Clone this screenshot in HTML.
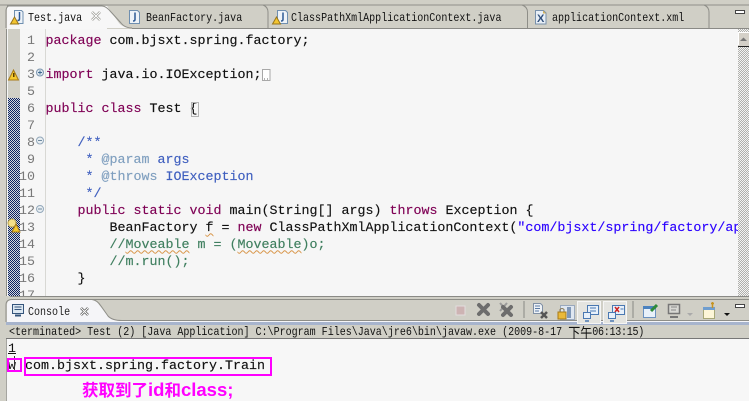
<!DOCTYPE html>
<html><head><meta charset="utf-8">
<style>
html,body{margin:0;padding:0}
body{width:749px;height:401px;overflow:hidden;position:relative;background:#d4d0c8;font-family:"Liberation Mono",monospace}
div{position:absolute}
.t{font-size:12px;line-height:14px;color:#111;white-space:pre;transform:scaleX(.835);transform-origin:0 0}
.o{font-size:13.33px;line-height:17px;color:#111;white-space:pre}
.l{left:45.5px;font-size:13.33px;line-height:17px;height:17px;white-space:pre;color:#111;-webkit-text-stroke:.15px}
.n{left:10px;width:25px;text-align:right;font-size:13.33px;line-height:17px;height:17px;color:#787878}
.k{color:#7f0055}.c{color:#3f7f5f}.j{color:#3f5fbf}.g{color:#7f9fbf}.s{color:#2a00ff}
.u{text-decoration:underline wavy #d8964a 1px;text-underline-offset:2px}
</style></head><body>

<!-- editor tab bar -->
<svg style="position:absolute;left:0;top:0" width="749" height="30">
<rect width="749" height="30" fill="#d0cfc6"/>
<path d="M0 5H749" stroke="#8f8f8a" fill="none"/>
<rect x="7" y="6" width="100" height="23" fill="#f7f7f7"/>
<path d="M107 6L119 23Q123 28 132 28L107 28Z" fill="#f7f7f7"/>
<path d="M7 6H102Q106 6 111 12L121 23Q125 28 132 28" fill="none" stroke="#8e8e88"/>
<path d="M6 28V11Q6 5 13 5H102" fill="none" stroke="#8e8e88"/>
<path d="M132 28.500H749" stroke="#8a8a86" fill="none"/>
<path d="M268 28V12Q268 7 263 5M527.500 28V12Q527.500 7 522 5M709 28V12Q709 7 704 5" stroke="#8e8e88" fill="none"/>
<rect x="735.500" y="10.500" width="9" height="3" fill="#fff" stroke="#444" stroke-width="1"/>
<!-- java file icons -->
<path d="M14.500 10.500h7l1.500 1.500v11.500h-8.500z" fill="#eef3f8" stroke="#6f8fb0"/><path d="M19.500 12v7q0 1.500-2 1.500" stroke="#2d5a96" stroke-width="1.500" fill="none"/>
<path d="M10.500 24L14.500 17L18.500 24z" fill="#f3c530" stroke="#97741a"/>
<path d="M129.500 10.500h8l2 2v11h-10z" fill="#eef3f8" stroke="#6f8fb0"/><path d="M135 12.500v7q0 1.500-2 1.500" stroke="#2d5a96" stroke-width="1.500" fill="none"/>
<path d="M277.500 10.500h8l2 2v11h-10z" fill="#eef3f8" stroke="#6f8fb0"/><path d="M283 12.500v7q0 1.500-2 1.500" stroke="#2d5a96" stroke-width="1.500" fill="none"/>
<path d="M272.500 24L276.500 17L280.500 24z" fill="#f3c530" stroke="#97741a"/>
<path d="M535.500 10.500h8l2.500 2.500v11h-10.500z" fill="#e7eef6" stroke="#7890aa"/>
<path d="M543 10.500l3 3h-3z" fill="#d8b45a"/>
<text x="537" y="22" font-family="Liberation Sans" font-size="11" font-weight="bold" fill="#31507c">X</text>
<path d="M92 12l8 8M100 12l-8 8" stroke="#9a9a94" stroke-width="2.500"/><path d="M92 12l8 8M100 12l-8 8" stroke="#fff" stroke-width="1"/>
</svg>
<div class="t" style="left:28px;top:11px">Test.java</div>
<div class="t" style="left:146px;top:11px">BeanFactory.java</div>
<div class="t" style="left:291px;top:11px">ClassPathXmlApplicationContext.java</div>
<div class="t" style="left:552px;top:11px">applicationContext.xml</div>

<!-- editor -->
<div style="left:6px;top:29px;width:743px;height:268px;background:#f6f6f6;overflow:hidden">
  <div style="left:0;top:0;width:1px;height:268px;background:#8e8e88"></div>
  <div style="left:2px;top:0;width:12px;height:268px;background:#d0cfc6"></div>
  <svg style="position:absolute;left:2px;top:69px" width="12" height="199" shape-rendering="crispEdges"><defs><pattern id="d" width="2" height="2" patternUnits="userSpaceOnUse"><rect width="2" height="2" fill="#d4d6dc"/><rect width="1" height="1" fill="#0a2060"/><rect x="1" y="1" width="1" height="1" fill="#0a2060"/></pattern></defs><rect width="12" height="199" fill="url(#d)"/></svg>
  <div style="left:39px;top:0;width:1px;height:268px;background:#d8d8d4"></div>
  <svg style="position:absolute;left:732px;top:0" width="11" height="268" shape-rendering="crispEdges"><defs><pattern id="e" width="2" height="2" patternUnits="userSpaceOnUse"><rect width="2" height="2" fill="#f4f4f4"/><rect width="1" height="1" fill="#b0b0ac"/><rect x="1" y="1" width="1" height="1" fill="#b0b0ac"/></pattern></defs><rect width="11" height="268" fill="url(#e)"/></svg>
  <div style="left:732px;top:3px;width:11px;height:14px;background:#d4d0c8;border-bottom:1px solid #222"></div>
  <svg style="position:absolute;left:732px;top:3px" width="11" height="14"><path d="M2 9L5.500 5.500L9 9z" fill="#777"/><path d="M.5 13V.5H11" stroke="#fff" fill="none"/></svg>
</div>

<div style="left:6px;top:29px;width:732px;height:267px;overflow:hidden">
<div style="left:-6px;top:-28px;width:749px;height:400px">
<div class="n" style="top:31.500px">1</div>
<div class="n" style="top:48.500px">2</div>
<div class="n" style="top:65.500px">3</div>
<div class="n" style="top:82.500px">5</div>
<div class="n" style="top:99.500px">6</div>
<div class="n" style="top:116.500px">7</div>
<div class="n" style="top:133.500px">8</div>
<div class="n" style="top:150.500px">9</div>
<div class="n" style="top:167.500px">10</div>
<div class="n" style="top:184.500px">11</div>
<div class="n" style="top:201.500px">12</div>
<div class="n" style="top:218.500px">13</div>
<div class="n" style="top:235.500px">14</div>
<div class="n" style="top:252.500px">15</div>
<div class="n" style="top:269.500px">16</div>
<div class="n" style="top:286.500px">17</div>

<div class="l" style="top:31.500px"><span class="k">package</span> com.bjsxt.spring.factory;</div>
<div class="l" style="top:65.500px"><span class="k">import</span> java.io.IOException;</div>
<div class="l" style="top:99.500px"><span class="k">public</span> <span class="k">class</span> Test {</div>
<div class="l j" style="top:133.500px">    /**</div>
<div class="l j" style="top:150.500px">     * <span class="g">@param</span> args</div>
<div class="l j" style="top:167.500px">     * <span class="g">@throws</span> IOException</div>
<div class="l j" style="top:184.500px">     */</div>
<div class="l" style="top:201.500px">    <span class="k">public</span> <span class="k">static</span> <span class="k">void</span> main(String[] args) <span class="k">throws</span> Exception {</div>
<div class="l" style="top:218.500px">        BeanFactory <span class="u">f</span> = <span class="k">new</span> ClassPathXmlApplicationContext(<span class="s">"com/bjsxt/spring/factory/ap</span></div>
<div class="l c" style="top:235.500px">        //<span class="u">Moveable</span> m = (<span class="u">Moveable</span>)o;</div>
<div class="l c" style="top:252.500px">        //m.run();</div>
<div class="l" style="top:269.500px">    }</div>
</div></div>

<svg style="position:absolute;left:0;top:29px" width="60" height="268">
<path d="M8.500 51L13.500 41L18.500 51z" fill="#f5c92e" stroke="#a77a18"/><rect x="13" y="44" width="1.500" height="4" fill="#5a3d00"/>
<circle cx="40" cy="43.500" r="3.500" fill="#dce6ee" stroke="#7d97b0"/><path d="M38 43.500h4M40 41.500v4" stroke="#3d6a90"/>
<circle cx="40" cy="111.500" r="3.500" fill="#e8eef2" stroke="#93a8ba"/><path d="M38 111.500h4" stroke="#6f8aa0"/>
<circle cx="40" cy="180" r="3.500" fill="#e8eef2" stroke="#93a8ba"/><path d="M38 180h4" stroke="#6f8aa0"/>
<circle cx="12" cy="194" r="4" fill="#f5e089" stroke="#b79f4a"/>
<path d="M12 203L16 195L20 203z" fill="#f5c92e" stroke="#a77a18"/>
</svg>
<svg style="position:absolute;left:262px;top:69px" width="12" height="13"><rect x=".5" y=".5" width="7.500" height="11" fill="#fff" stroke="#a8a8a8"/><path d="M2 10h1M5 10h1" stroke="#666"/></svg>
<div style="left:190.500px;top:101.500px;width:6px;height:13px;border:1px solid #b4b4b4"></div>

<!-- sash / console tab -->
<div style="left:0;top:296px;width:749px;height:105px;background:#d0cfc6"></div>
<div style="left:10px;top:296px;width:739px;height:1px;background:#8a8a86"></div>
<svg style="position:absolute;left:0;top:299px" width="749" height="30">
<path d="M6 23V6Q6 .5 12 .5H749" stroke="#8e8e88" fill="none"/>
<path d="M7 24V6Q7 1 12 1H92Q96 1 100 7L108 17Q112 22 122 22H749V24z" fill="#f5f5f8"/>
<path d="M92 .5Q97 1 101 7L108 17Q112 21.500 122 21.500H749" stroke="#8e8e88" fill="none"/>
<rect x="6" y="23" width="743" height="3" fill="#a7b4cd"/>
<rect x="12.500" y="5.500" width="11" height="9" fill="#dde8f2" stroke="#35557c"/>
<path d="M14.500 8h7M14.500 10.500h7" stroke="#35557c"/>
<path d="M15 16.500h6" stroke="#35557c" stroke-width="2"/>
<path d="M81 9l7 7M88 9l-7 7" stroke="#555" stroke-width="2.500"/><path d="M81 9l7 7M88 9l-7 7" stroke="#fff" stroke-width="1"/>
</svg>
<div class="t" style="left:28px;top:305px;color:#222">Console</div>

<!-- console toolbar -->
<svg style="position:absolute;left:440px;top:298px" width="309" height="26">
<rect x="16" y="8" width="9" height="9" fill="#cdb3b3" stroke="#e2dede"/>
<path d="M39 7l9 9M48 7l-9 9" stroke="#6d6d6d" stroke-width="4" stroke-linecap="round"/>
<path d="M60 5l7 8M67 5l-7 8" stroke="#9a9a9a" stroke-width="2"/>
<path d="M63 9l8 8M71 9l-8 8" stroke="#6d6d6d" stroke-width="4" stroke-linecap="round"/>
<path d="M84 3v17" stroke="#a0a09a" stroke-width="1.500"/>
<path d="M93.500 5.500h7l2 2v8h-9z" fill="#eef2f6" stroke="#8090a5"/><path d="M95 8h5M95 10.500h5M95 13h4" stroke="#5b7ba5"/>
<path d="M101 14l6 6M107 14l-6 6" stroke="#555" stroke-width="2.500"/>
<rect x="120.500" y="7.500" width="14" height="14" fill="#dfe7f1" stroke="#9aa9bd"/>
<rect x="127" y="9" width="4" height="11" fill="#7f97b7"/>
<rect x="118" y="14" width="8" height="7" fill="#eab93a" stroke="#a77a18"/><path d="M120 14v-2.500q2-2 4 0v2.500" stroke="#8a7a55" fill="none"/>
<rect x="137.500" y="3.500" width="23" height="22" fill="#e4e4e0" stroke="#f5f5f5"/>
<rect x="163.500" y="3.500" width="23" height="22" fill="#e4e4e0" stroke="#f5f5f5"/>
<rect x="147.500" y="7.500" width="11" height="9" fill="#e7f0fa" stroke="#4a78b2"/><path d="M150 10h6M150 13h6" stroke="#4a78b2"/>
<rect x="143.500" y="14.500" width="7" height="6" fill="#e7f0fa" stroke="#4a78b2"/><path d="M145 23h4" stroke="#4a78b2" stroke-width="1.500"/>
<rect x="172.500" y="7.500" width="12" height="9" fill="#e7f0fa" stroke="#4a78b2"/><path d="M175 9l4 5M179 9l-4 5" stroke="#c22" stroke-width="1.500"/><path d="M180.500 11h3" stroke="#4a78b2"/>
<rect x="168.500" y="14.500" width="7" height="6" fill="#e7f0fa" stroke="#4a78b2"/><path d="M170 23h4" stroke="#4a78b2" stroke-width="1.500"/>
<path d="M193 3v17" stroke="#a0a09a" stroke-width="1.500"/>
<rect x="203.500" y="8.500" width="12" height="11" fill="#e8f1fa" stroke="#6b91bf"/><rect x="203" y="8" width="13" height="3" fill="#4b82bf"/>
<path d="M211 13l6-6" stroke="#2f8a3a" stroke-width="3"/>
<rect x="228.500" y="6.500" width="11" height="9" fill="#d8d8d4" stroke="#777" stroke-width="1.500"/><path d="M231 9h6M231 12h5" stroke="#888"/><path d="M230 19h8" stroke="#777" stroke-width="2"/>
<path d="M247 15l3 3 3-3z" fill="#aaa"/>
<rect x="263.500" y="9.500" width="11" height="11" fill="#fdf6d8" stroke="#a8a878"/><rect x="263" y="9" width="12" height="3" fill="#6f9ecf"/>
<path d="M271 5.500h3M272.500 4v6" stroke="#c79420" stroke-width="1.500"/>
<path d="M284 15h6l-3 3z" fill="#111"/>
<rect x="295.500" y="6.500" width="9" height="3" fill="#fff" stroke="#444"/>
</svg>

<!-- console status + body -->
<div style="left:6px;top:325px;width:743px;height:13px;background:#d0cfc6;border-bottom:1px solid #777"></div>
<div class="t" style="left:9px;top:325px;font-family:'Liberation Mono','Noto Sans CJK SC',monospace">&lt;terminated&gt; Test (2) [Java Application] C:\Program Files\Java\jre6\bin\javaw.exe (2009-8-17 <span style="font-size:14.370px;line-height:10px;vertical-align:-1px;position:relative;top:2px">下午</span><span style="letter-spacing:-.3px">06:13:15)</span></div>
<div style="left:6px;top:339px;width:743px;height:62px;background:#f7f7f7"></div>
<div style="left:6px;top:339px;width:1px;height:62px;background:#a5a5a0"></div>
<div class="o" style="left:8px;top:341px;text-decoration:underline;text-underline-offset:1px">1</div>
<div class="o" style="left:8px;top:358px">w</div>
<div style="left:14px;top:356px;width:1px;height:15px;background:#333"></div>
<div class="o" style="left:25px;top:358px;-webkit-text-stroke:.15px">com.bjsxt.spring.factory.Train</div>
<div style="left:7px;top:358px;border:2px solid #f0f;width:11px;height:10px"></div>
<div style="left:24px;top:357px;width:244px;height:15px;border:2px solid #f0f"></div>
<div style="left:82px;top:380px;font-family:'Liberation Sans','Noto Sans CJK SC',sans-serif;font-size:16.500px;line-height:20px;font-weight:bold;color:#f0f;white-space:pre">获取到了<span style="font-size:18.500px">id</span>和<span style="font-size:18.500px">class;</span></div>
</body></html>
